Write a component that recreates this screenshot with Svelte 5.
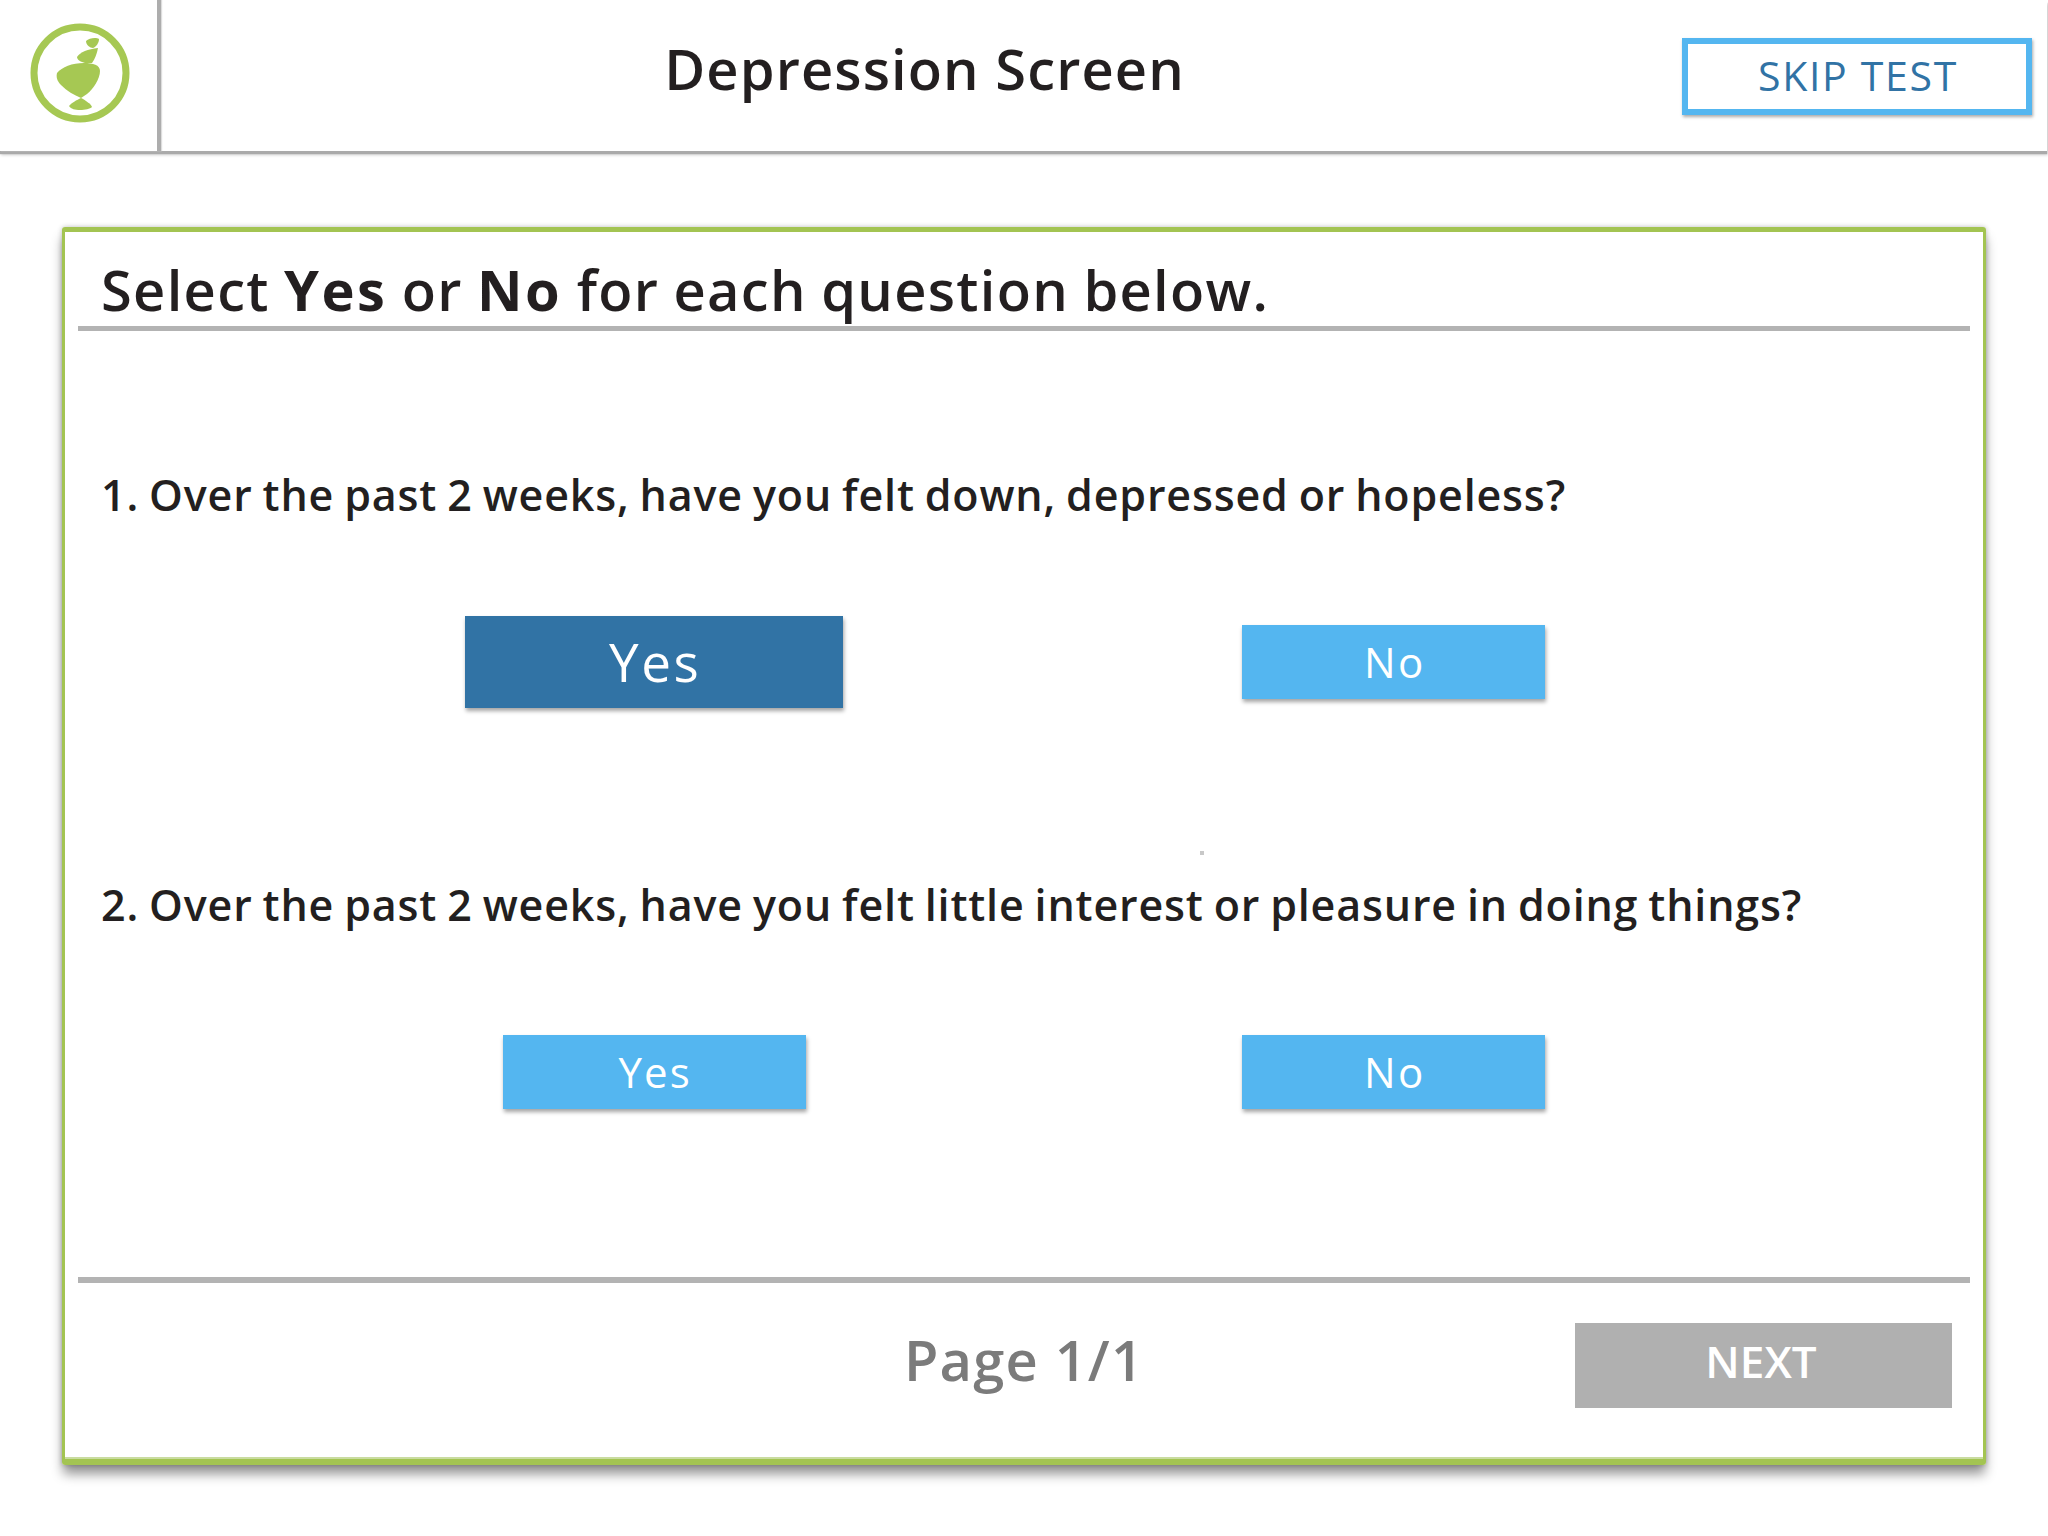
<script lang="ts">
  let answers = $state(['yes', '']);

  const questions = [
    '1. Over the past 2 weeks, have you felt down, depressed or hopeless?',
    '2. Over the past 2 weeks, have you felt little interest or pleasure in doing things?',
  ];

  function pick(i: number, value: string) {
    answers[i] = value;
  }
</script>

<div class="page">
  <header class="topbar">
    <div class="logo">
      <svg width="100" height="100" viewBox="0 0 100 100">
        <circle cx="50" cy="50" r="46" fill="none" stroke="#a6c853" stroke-width="7" />
        <path fill="#a6c853" d="M56 18C59 15 66 14 69 16C69 20 66 24 63 25C60 25 56 22 56 18Z" />
        <path fill="#a6c853" d="M47 34C50 29 58 26 68 25C67 30 65 36 62 40L55 40C51 39 47 37 47 34Z" />
        <path fill="#a6c853" d="M27 50C32 44 42 40 54 40C63 40 70 42 70 48C70 56 63 66 57 71L51 75C44 72 37 68 31 62C27 58 26 54 27 50Z" />
        <path fill="#a6c853" d="M51 75C55 77 61 81 62 84C60 86 55 87 50 87C45 87 41 86 39 83C41 80 47 77 51 75Z" />
      </svg>
    </div>
    <h1>Depression Screen</h1>
    <button class="skip">SKIP TEST</button>
  </header>

  <main class="card">
    <h2>Select <b>Yes</b> or <b>No</b> for each question below.</h2>
    <div class="questions">
      {#each questions as q, i}
        <section class="question">
          <p>{q}</p>
          <div class="choices">
            <button class="choice" class:active={answers[i] === 'yes'} onclick={() => pick(i, 'yes')}>Yes</button>
            <button class="choice" class:active={answers[i] === 'no'} onclick={() => pick(i, 'no')}>No</button>
          </div>
        </section>
      {/each}
    </div>
    <footer class="foot">
      <span class="pager">Page 1/1</span>
      <button class="next">NEXT</button>
    </footer>
    <i class="speck"></i>
  </main>
</div>

<style>
  :global(body) {
    margin: 0;
    background: #fff;
  }
  .page {
    width: 2048px;
    height: 1536px;
    overflow: hidden;
    font-family: 'Open Sans', sans-serif;
    color: #231f20;
    box-sizing: border-box;
  }
  button {
    font-family: inherit;
    border: none;
    padding: 0;
    cursor: pointer;
  }
  .topbar {
    width: 2047px;
    height: 151px;
    display: flex;
    align-items: stretch;
    box-shadow: 0 3px 1px #aaa, 1px 4px 3px #ccc;
  }
  .logo {
    width: 157px;
    box-sizing: content-box;
    border-right: 4px solid #adadad;
    box-shadow: 1px 0 1px #ddd;
    display: flex;
    align-items: center;
    justify-content: center;
    flex-shrink: 0;
    padding-bottom: 5px;
    height: 146px;
  }
  .logo svg {
    margin-left: 3px;
  }
  h1 {
    margin: 0;
    flex: 1;
    font-size: 56px;
    line-height: 137px;
    font-weight: 600;
    letter-spacing: 1.1px;
    text-align: center;
    padding-left: 6px;
  }
  .skip {
    align-self: flex-start;
    margin: 38px 15px 0 0;
    width: 350px;
    height: 77px;
    box-sizing: border-box;
    border: 6px solid #54b6f0;
    background: #fff;
    color: #3173a5;
    font-size: 41px;
    letter-spacing: 1.7px;
    padding: 0 0 4px 2px;
    box-shadow: 1px 2px 3px #aaa;
  }
  .card {
    margin: 76px 0 0 62px;
    width: 1924px;
    height: 1238px;
    box-sizing: border-box;
    border: solid #a3c452;
    border-width: 5px 3px 6px;
    border-radius: 3px;
    box-shadow: 0 10px 12px -1px rgba(0, 0, 0, 0.42), 0 0 5px rgba(0, 0, 0, 0.25), inset 0 -2px 0 #c9dca0;
    display: flex;
    flex-direction: column;
    position: relative;
  }
  h2 {
    margin: 0 13px;
    padding: 0 0 0 23px;
    height: 94px;
    border-bottom: 5px solid #b3b3b3;
    font-size: 56px;
    font-weight: 600;
    line-height: 115px;
    letter-spacing: 1.3px;
    word-spacing: -1.5px;
  }
  h2 b {
    font-weight: 700;
    letter-spacing: 2.5px;
  }
  .questions {
    flex: 1;
    min-height: 0;
  }
  .question {
    height: 410px;
  }
  .question:first-child {
    margin-top: 133px;
  }
  .question p {
    margin: 0 0 0 36px;
    font-size: 43px;
    line-height: 62px;
    font-weight: 600;
    letter-spacing: 0.84px;
    word-spacing: -2px;
  }
  .choices {
    display: grid;
    grid-template-columns: 1fr 1fr;
    justify-items: center;
    align-items: center;
    height: 92px;
    margin-top: 90px;
    padding: 0 219.5px;
  }
  .choice {
    width: 303px;
    height: 74px;
    background: #54b6f0;
    color: #fff;
    font-size: 42px;
    font-weight: 500;
    letter-spacing: 2.2px;
    padding: 0 0 2px 2px;
    box-shadow: 1px 3px 4px #a5a5a5;
  }
  .choice.active {
    width: 378px;
    height: 92px;
    background: #3173a5;
    font-size: 53px;
    letter-spacing: 2.6px;
  }
  .foot {
    margin: 0 13px;
    height: 176px;
    border-top: 6px solid #b3b3b3;
    position: relative;
    display: flex;
    align-items: flex-start;
    justify-content: flex-end;
  }
  .pager {
    position: absolute;
    left: 0;
    right: 0;
    top: 38px;
    text-align: center;
    font-size: 56px;
    font-weight: 600;
    line-height: 76px;
    letter-spacing: 1.2px;
    color: #7b7b7b;
  }
  .next {
    margin: 40px 18px 0 0;
    width: 377px;
    height: 85px;
    background: #b0b0b0;
    color: #fff;
    font-size: 44px;
    font-weight: 600;
    padding: 0 5px 10px 0;
    position: relative;
  }
  .speck {
    position: absolute;
    left: 1135px;
    top: 619px;
    width: 4px;
    height: 4px;
    background: #c8c8c8;
  }
</style>
